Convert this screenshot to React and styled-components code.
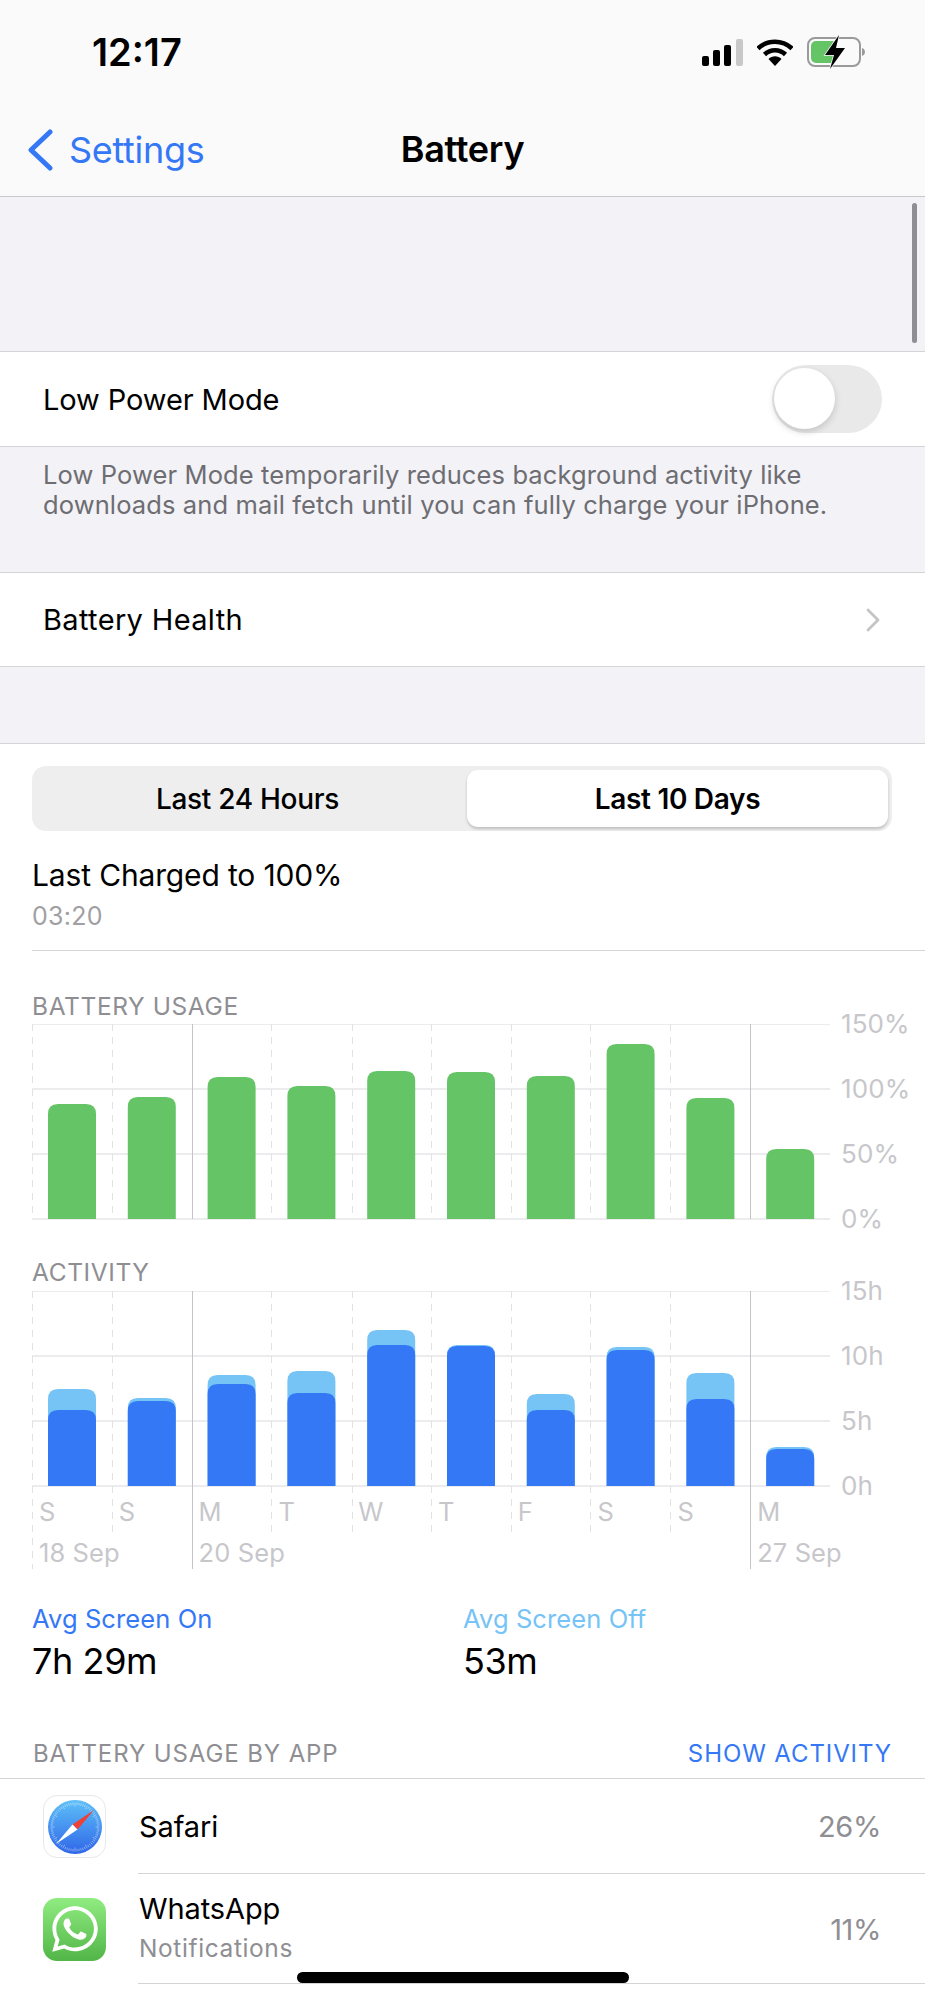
import React from 'react';
import styled, { createGlobalStyle } from 'styled-components';
import { FaWhatsapp } from 'react-icons/fa';

const Global = createGlobalStyle`
  html, body { margin: 0; padding: 0; background: #fff; }
  body { font-family: Inter, "Liberation Sans", sans-serif; -webkit-font-smoothing: antialiased; }
`;

const Page = styled.div`
  position: relative;
  width: 925px;
  height: 2000px;
  overflow: hidden;
  background: #fff;
  display: flex;
  flex-direction: column;
`;

const Header = styled.header`
  height: 197px;
  flex: none;
  box-sizing: border-box;
  background: #fafafb;
  border-bottom: 1px solid #c9c9cd;
  display: flex;
  flex-direction: column;
`;
const StatusBar = styled.div`
  height: 90px;
  padding: 14px 60px 0 92px;
  box-sizing: border-box;
  display: flex;
  align-items: center;
  justify-content: space-between;
`;
const Time = styled.span`
  font-size: 38px;
  font-weight: 600;
  letter-spacing: 0;
  color: #000;
`;
const StatusIcons = styled.div`
  display: flex;
  align-items: center;
  gap: 14px;
`;
const NavBar = styled.div`
  position: relative;
  height: 106px;
  padding-top: 12px;
  box-sizing: border-box;
  display: flex;
  align-items: center;
  justify-content: center;
`;
const BackLink = styled.div`
  position: absolute;
  left: 27px;
  top: 38px;
  display: flex;
  align-items: center;
  gap: 16px;
  color: #3478f6;
  font-size: 36px;
  letter-spacing: -0.3px;
`;
const Title = styled.div`
  font-size: 36px;
  font-weight: 600;
  letter-spacing: -0.3px;
  color: #000;
`;

const ScrollThumb = styled.div`
  position: absolute;
  left: 912px;
  top: 203px;
  width: 5px;
  height: 140px;
  border-radius: 3px;
  background: #8e8e93;
`;

const Gap = styled.div`
  flex: none;
  background: #f2f2f7;
  height: ${p => p.$h}px;
`;
const Row = styled.div`
  flex: none;
  box-sizing: border-box;
  height: ${p => p.$h}px;
  padding: 0 ${p => p.$pr || 43}px 0 43px;
  background: #fff;
  border-top: 1px solid #d4d4d7;
  border-bottom: 1px solid #d4d4d7;
  display: flex;
  align-items: center;
  justify-content: space-between;
`;
const RowLabel = styled.span`
  font-size: 29px;
  letter-spacing: ${p => p.$ls ?? -0.1}px;
  color: #000;
`;
const Toggle = styled.div`
  position: relative;
  width: 110px;
  height: 68px;
  border-radius: 34px;
  background: #e9e9ea;
`;
const Knob = styled.div`
  position: absolute;
  left: 2px;
  top: 3px;
  width: 61px;
  height: 61px;
  border-radius: 50%;
  background: #fff;
  box-shadow: 0 3px 7px rgba(0,0,0,.16);
`;
const FooterNote = styled.div`
  flex: none;
  height: 125px;
  box-sizing: border-box;
  padding: 13px 43px 0;
  background: #f2f2f7;
  font-size: 25.5px;
  line-height: 30px;
  letter-spacing: 0.12px;
  color: #6d6d72;
  white-space: nowrap;
`;

const Panel = styled.section`
  flex: 1;
  background: #fff;
  border-top: 1px solid #d4d4d7;
  display: flex;
  flex-direction: column;
  min-height: 0;
`;
const Segmented = styled.div`
  margin: 22px 33px 0 32px;
  height: 65px;
  padding: 4px;
  box-sizing: border-box;
  border-radius: 14px;
  background: #eeeeef;
  display: grid;
  grid-template-columns: 431px 421px;
`;
const Segment = styled.div`
  display: flex;
  align-items: center;
  justify-content: center;
  padding-right: ${p => (p.$active ? 0 : 8)}px;
  font-size: 28px;
  font-weight: ${p => (p.$active ? 600 : 500)};
  letter-spacing: -0.3px;
  color: #000;
  border-radius: 11px;
  background: ${p => (p.$active ? '#fff' : 'transparent')};
  box-shadow: ${p => (p.$active ? '0 2px 3px rgba(0,0,0,.2)' : 'none')};
`;
const Charged = styled.div`
  margin: 26px 0 0 32px;
  height: 93px;
  border-bottom: 1px solid #d4d4d7;
  display: flex;
  flex-direction: column;
`;
const ChargedTitle = styled.div`
  font-size: 30px;
  line-height: 36px;
  letter-spacing: -0.15px;
  color: #000;
`;
const ChargedTime = styled.div`
  margin-top: 8px;
  font-size: 25px;
  line-height: 30px;
  letter-spacing: 0.3px;
  color: #a0a0a4;
`;
const ChartBlock = styled.div`
  margin-left: 32px;
  margin-top: ${p => p.$mt}px;
`;
const ChartTitle = styled.div`
  height: 30px;
  line-height: 30px;
  font-size: 24.5px;
  letter-spacing: 0.6px;
  color: #8e8e93;
  margin-bottom: ${p => p.$mb}px;
`;
const ChartRow = styled.div`
  display: flex;
  align-items: flex-start;
`;
const Plot = styled.div`
  position: relative;
  width: 798px;
  height: ${p => p.$h}px;
  padding-top: 195px;
  box-sizing: border-box;
`;
const PlotSvg = styled.svg`
  position: absolute;
  left: 0;
  top: 0;
`;
const YAxis = styled.div`
  margin: -15px 0 0 11px;
  height: 225px;
  display: flex;
  flex-direction: column;
  justify-content: space-between;
`;
const YLabel = styled.span`
  height: 30px;
  line-height: 30px;
  font-size: 26px;
  letter-spacing: 0.1px;
  color: #c7c7cb;
  white-space: nowrap;
`;
const LabelRow = styled.div`
  position: relative;
  display: grid;
  grid-template-columns: repeat(10, 79.8px);
  height: ${p => p.$h}px;
  align-items: center;
  font-size: 25.5px;
  letter-spacing: 0.1px;
  color: #c7c7cb;
  white-space: nowrap;
`;
const AxisText = styled.span`
  padding-left: 7px;
  grid-column: ${p => p.$col || 'auto'};
`;
const Averages = styled.div`
  margin: 35px 0 0 32px;
  display: grid;
  grid-template-columns: 431px 1fr;
`;
const AvgCell = styled.div`
  display: flex;
  flex-direction: column;
`;
const AvgLabel = styled.div`
  font-size: 25.5px;
  line-height: 30px;
  letter-spacing: 0.1px;
  color: ${p => p.$color};
`;
const AvgValue = styled.div`
  margin-top: 7px;
  font-size: 36px;
  line-height: 40px;
  letter-spacing: -0.4px;
  color: #000;
`;
const AppsHeader = styled.div`
  margin-top: 57px;
  height: 41px;
  padding: 0 33px 10px 33px;
  box-sizing: border-box;
  display: flex;
  justify-content: space-between;
  align-items: center;
  font-size: 24px;
  letter-spacing: 0.9px;
  color: #8e8e93;
  border-bottom: 1px solid #d4d4d7;
`;
const ShowActivity = styled.span`
  color: #3478f6;
`;
const AppRow = styled.div`
  box-sizing: border-box;
  height: ${p => p.$h}px;
  display: grid;
  grid-template-columns: 63px 1fr auto;
  column-gap: 33px;
  align-items: center;
  padding: 0 44px 0 43px;
  position: relative;
  &::after {
    content: '';
    position: absolute;
    left: 138px;
    right: 0;
    bottom: 0;
    height: 1px;
    background: #d4d4d7;
  }
`;
const AppText = styled.div`
  padding-bottom: 4px;
`;
const AppName = styled.div`
  font-size: 29px;
  line-height: 36px;
  letter-spacing: -0.1px;
  color: #000;
`;
const AppSub = styled.div`
  margin-top: 6px;
  font-size: 24.5px;
  line-height: 30px;
  letter-spacing: 0.6px;
  color: #8e8e93;
`;
const Percent = styled.div`
  font-size: 29px;
  letter-spacing: -0.4px;
  color: #8e8e93;
`;
const IconTile = styled.div`
  width: 63px;
  height: 63px;
  box-sizing: border-box;
  border-radius: 14px;
  display: flex;
  align-items: center;
  justify-content: center;
  background: ${p => p.$bg};
  border: ${p => (p.$outlined ? '1px solid #e8e8ea' : 'none')};
  color: #fff;
`;
const HomeIndicator = styled.div`
  position: absolute;
  left: 297px;
  top: 1972px;
  width: 332px;
  height: 11px;
  border-radius: 6px;
  background: #000;
`;

const lineXs = [0, 80, 160, 239, 320, 399, 479, 558, 638, 718, 798];
const majors = [160, 718];

function Grid({ extend }) {
  return (
    <>
      {[0, 65, 130, 195].map(y => (
        <rect key={y} x="0" y={y - 1} width="798" height="2" fill="#ececee" />
      ))}
      {lineXs.map(x => {
        const major = majors.includes(x);
        const bottom = extend ? (major || x === 0 || x === 798 ? 278 : 244) : 195;
        return (
          <line
            key={x}
            x1={x + 0.5}
            x2={x + 0.5}
            y1="0"
            y2={bottom}
            stroke={major ? '#c4c4c8' : '#e2e2e4'}
            strokeWidth="1"
            strokeDasharray={major ? undefined : '7 6'}
          />
        );
      })}
    </>
  );
}

function barPath(x, h, w = 48, r = 10) {
  const top = 195 - h;
  const rr = Math.min(r, h);
  return `M${x} 195V${top + rr}Q${x} ${top} ${x + rr} ${top}H${x + w - rr}Q${x + w} ${top} ${x + w} ${top + rr}V195Z`;
}
const barX = i => 16 + i * 79.8;

const usage = [115, 122, 142, 133, 148, 147, 143, 175, 121, 70];
const light = [97, 88, 111, 115, 156, 141, 92, 139, 113, 39];
const dark = [76, 85, 102, 93, 141, 140, 76, 136, 87, 37];

const days = ['S', 'S', 'M', 'T', 'W', 'T', 'F', 'S', 'S', 'M'];

function SafariIcon() {
  const ticks = [];
  for (let i = 0; i < 72; i++) {
    const a = (i * 5 * Math.PI) / 180;
    const r1 = i % 6 === 0 ? 20.5 : 22;
    const r2 = 24.5;
    ticks.push(
      <line
        key={i}
        x1={27 + r1 * Math.cos(a)}
        y1={27 + r1 * Math.sin(a)}
        x2={27 + r2 * Math.cos(a)}
        y2={27 + r2 * Math.sin(a)}
        stroke="#fff"
        strokeOpacity="0.7"
        strokeWidth="0.6"
      />
    );
  }
  return (
    <svg width="54" height="54" viewBox="0 0 54 54">
      <defs>
        <linearGradient id="safariGrad" x1="0" y1="0" x2="0" y2="1">
          <stop offset="0" stopColor="#5ec0f8" />
          <stop offset="1" stopColor="#2f66e8" />
        </linearGradient>
      </defs>
      <circle cx="27" cy="27" r="27" fill="url(#safariGrad)" />
      {ticks}
      <polygon points="46,10 24.5,24.5 29.5,29.5" fill="#ee4035" />
      <polygon points="8,44 24.5,24.5 29.5,29.5" fill="#fff" />
    </svg>
  );
}

function StatusGlyphs() {
  return (
    <StatusIcons>
      <svg width="41" height="27" viewBox="0 0 41 27">
        <rect x="0" y="17" width="7" height="10" rx="2" fill="#000" />
        <rect x="11" y="11" width="7" height="16" rx="2" fill="#000" />
        <rect x="22" y="6" width="7" height="21" rx="2" fill="#000" />
        <rect x="34" y="0" width="7" height="27" rx="2" fill="#c8c8c8" />
      </svg>
      <svg width="36" height="27" viewBox="0 0 36 27">
        <path d="M1 9.5C10.5 0.5 25.5 0.5 35 9.5" fill="none" stroke="#000" strokeWidth="4.6" />
        <path d="M7.5 15.5C13.5 9.8 22.5 9.8 28.5 15.5" fill="none" stroke="#000" strokeWidth="4.6" />
        <path d="M18 27L11.5 20C15 16.3 21 16.3 24.5 20Z" fill="#000" />
      </svg>
      <svg width="58" height="34" viewBox="0 0 58 34">
        <rect x="1" y="3" width="52" height="28" rx="7" fill="none" stroke="#9a9a9c" strokeWidth="2" />
        <path d="M4 11a5 5 0 0 1 5-5H28V28H9a5 5 0 0 1-5-5Z" fill="#65c466" />
        <path d="M55 13v8c1.8-.6 3-2.2 3-4s-1.2-3.4-3-4Z" fill="#9a9a9c" />
        <path d="M32 0L18 20H27L23 34L38 13H29Z" fill="#000" stroke="#fafafb" strokeWidth="1.5" paintOrder="stroke" />
      </svg>
    </StatusIcons>
  );
}

export default function App() {
  return (
    <Page>
      <Global />
      <Header>
        <StatusBar>
          <Time>12:17</Time>
          <StatusGlyphs />
        </StatusBar>
        <NavBar>
          <BackLink>
            <svg width="26" height="42" viewBox="0 0 26 42">
              <path d="M23 3L4 21L23 39" fill="none" stroke="#3478f6" strokeWidth="5" strokeLinecap="round" strokeLinejoin="round" />
            </svg>
            Settings
          </BackLink>
          <Title>Battery</Title>
        </NavBar>
      </Header>
      <Gap $h={154} />
      <Row $h={96}>
        <RowLabel>Low Power Mode</RowLabel>
        <Toggle>
          <Knob />
        </Toggle>
      </Row>
      <FooterNote>
        Low Power Mode temporarily reduces background activity like<br />
        downloads and mail fetch until you can fully charge your iPhone.
      </FooterNote>
      <Row $h={95} $pr={45}>
        <RowLabel $ls={0.35}>Battery Health</RowLabel>
        <svg width="14" height="24" viewBox="0 0 14 24">
          <path d="M2 2L12 12L2 22" fill="none" stroke="#c4c4c7" strokeWidth="2.8" strokeLinecap="round" strokeLinejoin="round" />
        </svg>
      </Row>
      <Gap $h={76} />
      <Panel>
        <Segmented>
          <Segment>Last 24 Hours</Segment>
          <Segment $active>Last 10 Days</Segment>
        </Segmented>
        <Charged>
          <ChargedTitle>Last Charged to 100%</ChargedTitle>
          <ChargedTime>03:20</ChargedTime>
        </Charged>
        <ChartBlock $mt={40}>
          <ChartTitle $mb={3}>BATTERY USAGE</ChartTitle>
          <ChartRow>
            <Plot $h={195}>
              <PlotSvg width="798" height="196" viewBox="0 0 798 196">
                <Grid />
                {usage.map((h, i) => (
                  <path key={i} d={barPath(barX(i), h)} fill="#65c466" />
                ))}
              </PlotSvg>
            </Plot>
            <YAxis>
              {['150%', '100%', '50%', '0%'].map(t => <YLabel key={t}>{t}</YLabel>)}
            </YAxis>
          </ChartRow>
        </ChartBlock>
        <ChartBlock $mt={23}>
          <ChartTitle $mb={4}>ACTIVITY</ChartTitle>
          <ChartRow>
            <Plot $h={278}>
              <PlotSvg width="798" height="278" viewBox="0 0 798 278">
                <Grid extend />
                {light.map((h, i) => (
                  <path key={i} d={barPath(barX(i), h)} fill="#76c3f6" />
                ))}
                {dark.map((h, i) => (
                  <path key={i} d={barPath(barX(i), h)} fill="#3478f6" />
                ))}
              </PlotSvg>
              <LabelRow $h={51}>
                {days.map((d, i) => <AxisText key={i}>{d}</AxisText>)}
              </LabelRow>
              <LabelRow $h={28}>
                <AxisText $col="1 / span 2">18 Sep</AxisText>
                <AxisText $col="3 / span 2">20 Sep</AxisText>
                <AxisText $col="10">27 Sep</AxisText>
              </LabelRow>
            </Plot>
            <YAxis>
              {['15h', '10h', '5h', '0h'].map(t => <YLabel key={t}>{t}</YLabel>)}
            </YAxis>
          </ChartRow>
        </ChartBlock>
        <Averages>
          <AvgCell>
            <AvgLabel $color="#3478f6">Avg Screen On</AvgLabel>
            <AvgValue>7h 29m</AvgValue>
          </AvgCell>
          <AvgCell>
            <AvgLabel $color="#76c3f6">Avg Screen Off</AvgLabel>
            <AvgValue>53m</AvgValue>
          </AvgCell>
        </Averages>
        <AppsHeader>
          <span>BATTERY USAGE BY APP</span>
          <ShowActivity>SHOW ACTIVITY</ShowActivity>
        </AppsHeader>
        <AppRow $h={95}>
          <IconTile $bg="#fff" $outlined><SafariIcon /></IconTile>
          <AppName>Safari</AppName>
          <Percent>26%</Percent>
        </AppRow>
        <AppRow $h={110}>
          <IconTile $bg="linear-gradient(#90ec80, #52b548)"><FaWhatsapp size={52} /></IconTile>
          <AppText>
            <AppName>WhatsApp</AppName>
            <AppSub>Notifications</AppSub>
          </AppText>
          <Percent>11%</Percent>
        </AppRow>
      </Panel>
      <ScrollThumb />
      <HomeIndicator />
    </Page>
  );
}
